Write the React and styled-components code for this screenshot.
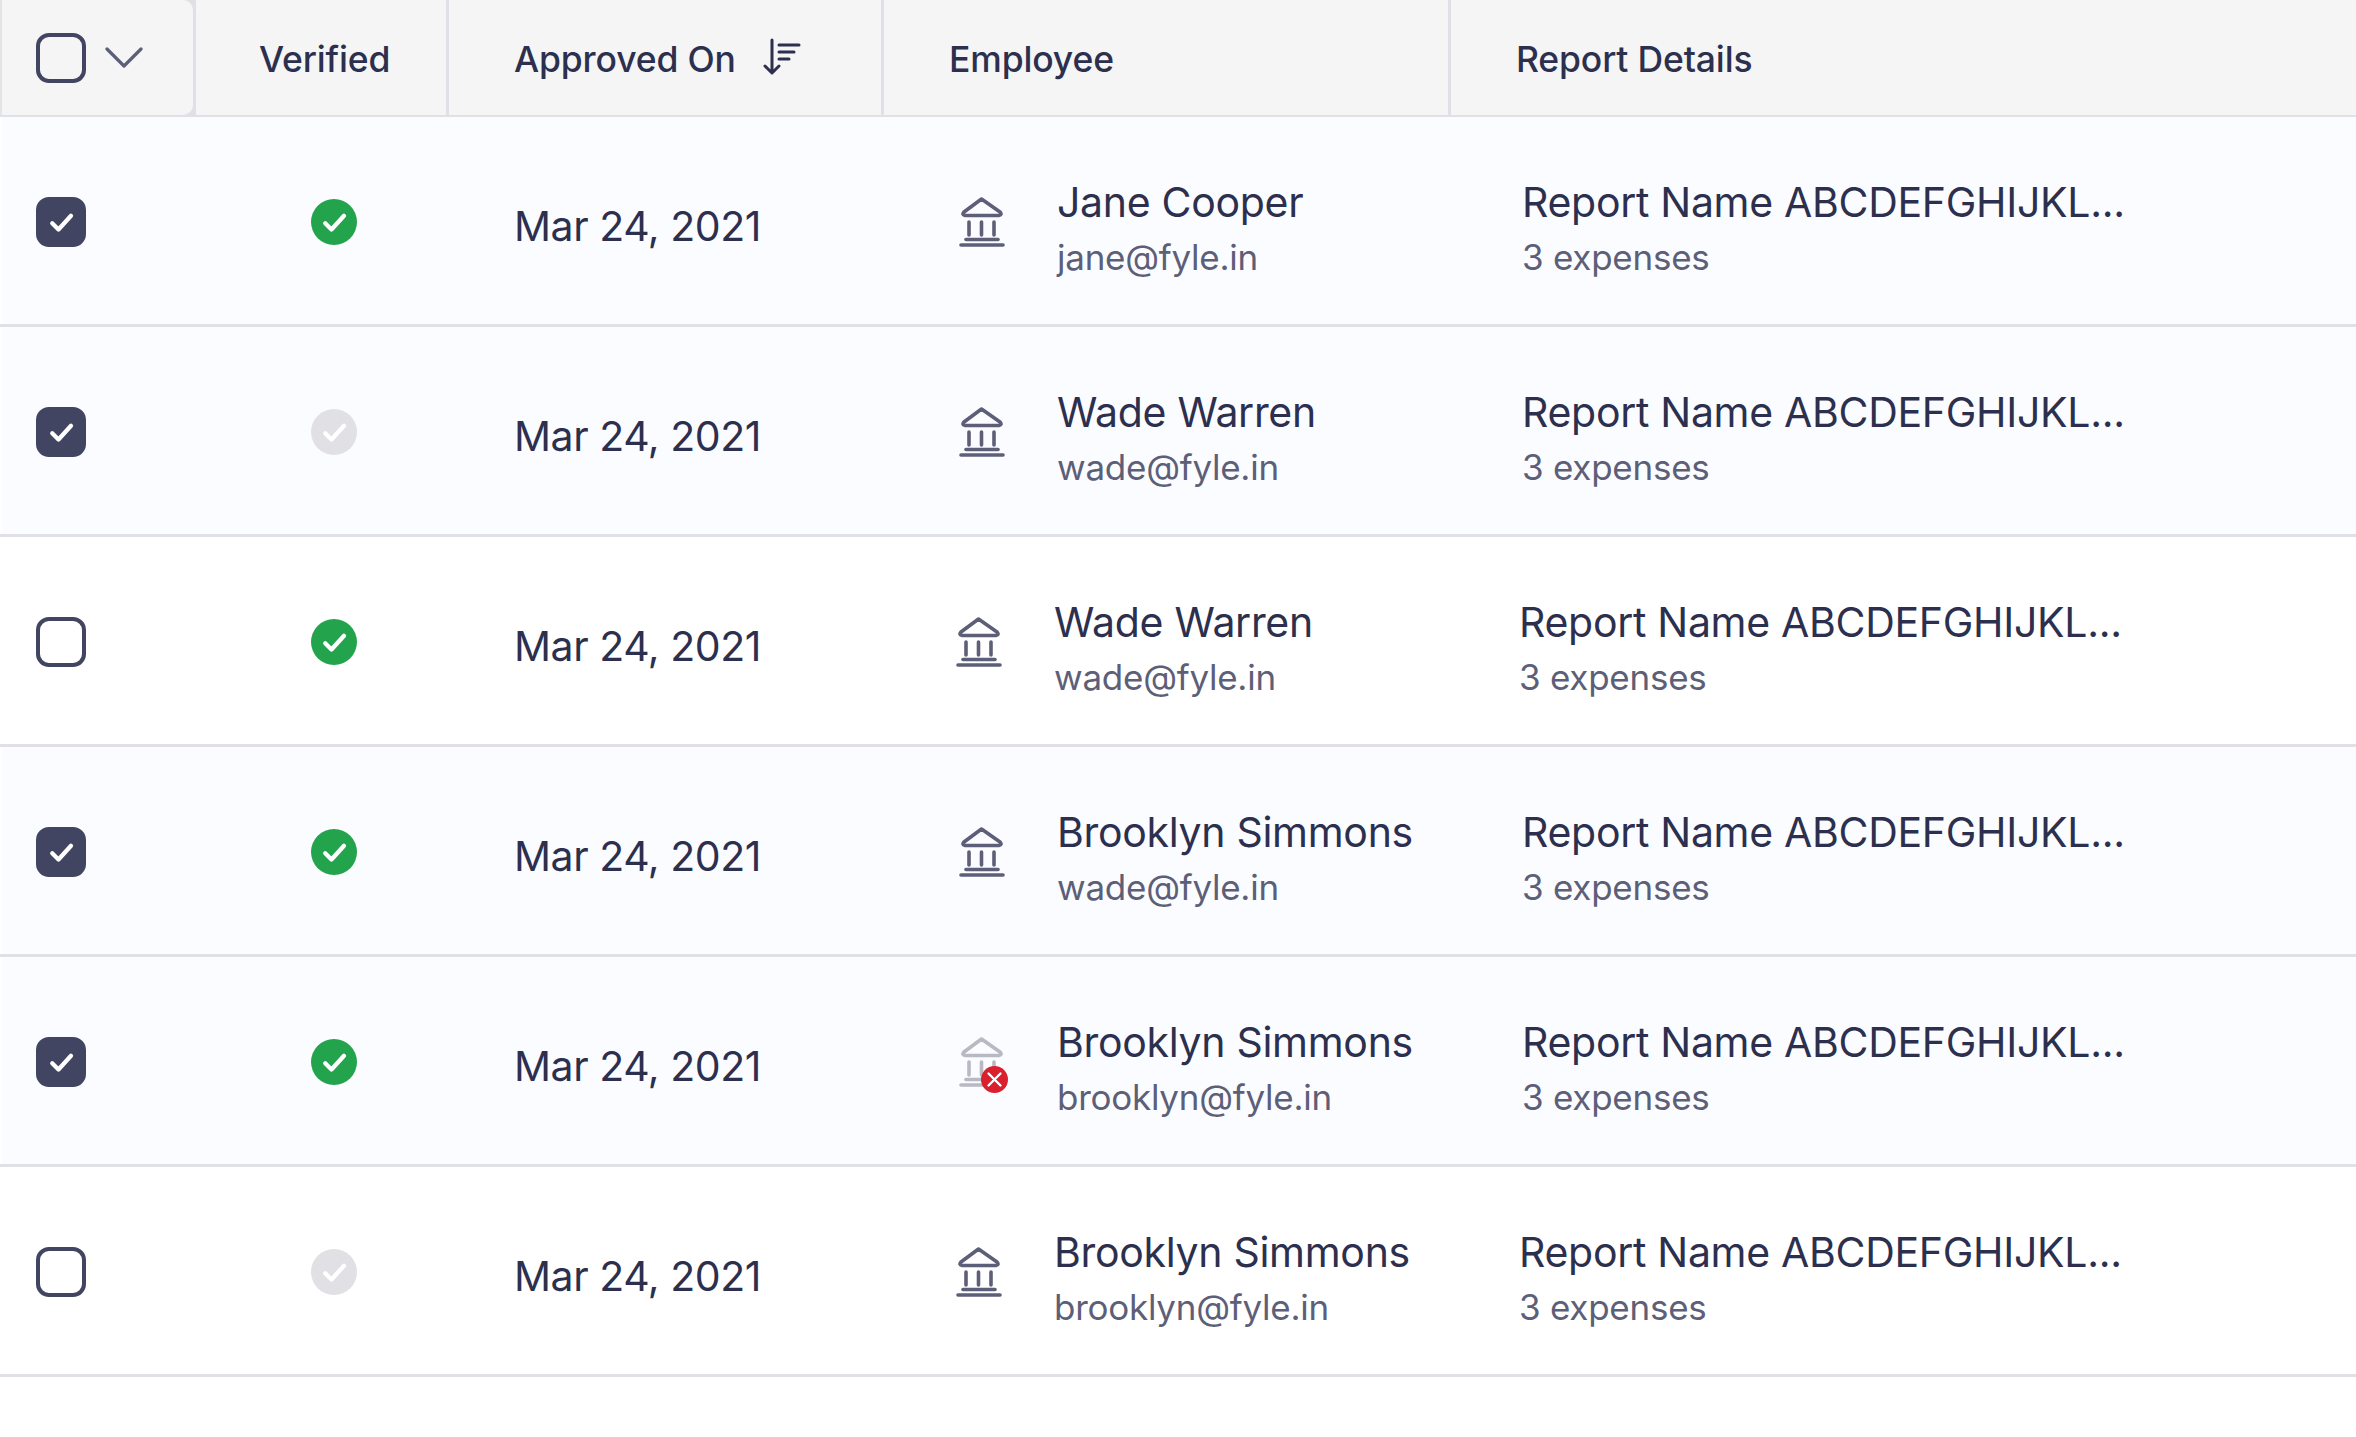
import React from 'react';
import styled, {createGlobalStyle} from 'styled-components';

const Global = createGlobalStyle`
  html, body {
    margin: 0;
    padding: 0;
    background: #fff;
    overflow: hidden;
  }
  body {
    font-family: Inter, "Open Sans", "Liberation Sans", sans-serif;
    color: #2c304e;
  }
`

const Table = styled.div`
  width: 2356px;
  height: 1437px;
`

const HeaderRow = styled.div`
  display: grid;
  grid-template-columns: 196px 253px 435px 567px 1fr;
  height: 118px;
  margin-bottom: -1px;
  box-sizing: border-box;
  border-bottom: 3px solid #e0e0e6;
  background: #e0e0e6;
`

const HeaderCell = styled.div`
  display: flex;
  align-items: center;
  box-sizing: border-box;
  background: #f5f5f5;
  padding-left: ${p => p.$pad}px;
  padding-top: ${p => p.$round ? 0 : 3}px;
  margin-right: 3px;
  font-size: 35.5px;
  font-weight: 500;
  letter-spacing: -0.15px;
  color: #2c304e;
  border-bottom-right-radius: ${p => p.$round ? 10 : 0}px;
  border-top-right-radius: ${p => p.$round ? 10 : 0}px;
  box-shadow: ${p => p.$round ? 'inset 2px 0 0 #e4e4e8' : 'none'};
  &:last-child {
    margin-right: 0;
  }
`

const Row = styled.div`
  display: grid;
  grid-template-columns: 196px 253px 435px ${p => p.$shift ? 564 : 567}px 1fr;
  height: 210px;
  padding-top: 3px;
  box-sizing: border-box;
  border-bottom: 3px solid #e0e0e6;
  background: ${p => p.$tinted ? '#fbfcff' : '#fff'};
  box-shadow: inset 2px 0 0 #fff;
`

const Cell = styled.div`
  display: flex;
  align-items: center;
  box-sizing: border-box;
  padding-left: ${p => p.$pad || 0}px;
`

const Box = styled.div`
  width: 50px;
  height: 50px;
  box-sizing: border-box;
  border-radius: 13px;
  border: 4px solid #414562;
  background: ${p => p.$checked ? '#414562' : 'transparent'};
  display: flex;
  align-items: center;
  justify-content: center;
`

const Chevron = styled.svg`
  width: 38px;
  height: 24px;
  margin-left: 19px;
  margin-top: 0;
`

const SortIcon = styled.svg`
  width: 38px;
  height: 38px;
  margin-left: 27px;
  margin-top: -4px;
`

const Dot = styled.div`
  width: 46px;
  height: 46px;
  border-radius: 50%;
  background: ${p => p.$on ? '#24a34d' : '#e0e0e5'};
  display: flex;
  align-items: center;
  justify-content: center;
`

const DateText = styled.div`
  font-size: 41px;
  letter-spacing: -0.45px;
  color: #2c304e;
  margin-top: 7px;
`

const Bank = styled.div`
  position: relative;
  width: 46px;
  height: 50px;
  flex-shrink: 0;
  color: ${p => p.$faded ? '#b7b9c3' : '#5d5f78'};
`

const Badge = styled.div`
  position: absolute;
  right: -3px;
  bottom: -6px;
  width: 27px;
  height: 27px;
  border-radius: 50%;
  background: #da1f2e;
  display: flex;
  align-items: center;
  justify-content: center;
`

const Stack = styled.div`
  margin-left: ${p => p.$gap || 0}px;
  padding-top: 11px;
  display: flex;
  flex-direction: column;
`

const Title = styled.div`
  font-size: 41px;
  line-height: 50px;
  letter-spacing: -0.3px;
  color: #2c304e;
`

const Sub = styled.div`
  font-size: 35px;
  line-height: 44px;
  margin-top: 8px;
  letter-spacing: -0.25px;
  color: #5d5f78;
`

const Check = ({size, color}) => (
  <svg width={size} height={size} viewBox="0 0 24 24" fill="none">
    <path d="M5 13 L10 18 L20 7" stroke={color} strokeWidth="3.4" strokeLinecap="round" strokeLinejoin="round"/>
  </svg>
)

const BankIcon = () => (
  <svg width="46" height="50" viewBox="0 0 46 50" fill="none" stroke="currentColor" strokeWidth="3.6" strokeLinecap="round" strokeLinejoin="round">
    <path d="M22.5 2 L41 15 Q43.5 18 40 18.5 L6 18.5 Q2.5 18 5 15 Z"/>
    <path d="M10 25 V38 M22.5 25 V38 M35 25 V38"/>
    <path d="M7 42.5 H39"/>
    <path d="M2 48 H44"/>
  </svg>
)

const rows = [
  {id: 1, checked: true, verified: true, name: 'Jane Cooper', email: 'jane@fyle.in', tinted: true},
  {id: 2, checked: true, verified: false, name: 'Wade Warren', email: 'wade@fyle.in', tinted: true},
  {id: 3, checked: false, verified: true, name: 'Wade Warren', email: 'wade@fyle.in', shift: true},
  {id: 4, checked: true, verified: true, name: 'Brooklyn Simmons', email: 'wade@fyle.in', tinted: true},
  {id: 5, checked: true, verified: true, name: 'Brooklyn Simmons', email: 'brooklyn@fyle.in', tinted: true, error: true},
  {id: 6, checked: false, verified: false, name: 'Brooklyn Simmons', email: 'brooklyn@fyle.in', shift: true},
]

const App = () => {
  return (
    <Table>
      <Global/>
      <HeaderRow>
        <HeaderCell $pad={36} $round>
          <Box/>
          <Chevron viewBox="0 0 38 24" fill="none">
            <path d="M2 3 L19 20 L36 3" stroke="#5d5f78" strokeWidth="3.2" strokeLinecap="round" strokeLinejoin="round"/>
          </Chevron>
        </HeaderCell>
        <HeaderCell $pad={63}>Verified</HeaderCell>
        <HeaderCell $pad={65}>
          Approved On
          <SortIcon viewBox="0 0 38 38" fill="none" stroke="#2c304e" strokeWidth="3" strokeLinecap="round" strokeLinejoin="round">
            <path d="M9 2 V35 M2 28 L9 35 L16 28"/>
            <path d="M16 7 H36 M16 14 H31 M16 21 H26"/>
          </SortIcon>
        </HeaderCell>
        <HeaderCell $pad={65}>Employee</HeaderCell>
        <HeaderCell $pad={65}>Report Details</HeaderCell>
      </HeaderRow>
      {rows.map(r => (
        <Row key={r.id} $tinted={r.tinted} $shift={r.shift}>
          <Cell $pad={36}>
            <Box $checked={r.checked}>
              {r.checked && <Check size={30} color="#fff"/>}
            </Box>
          </Cell>
          <Cell $pad={115}>
            <Dot $on={r.verified}>
              <Check size={30} color="#fff"/>
            </Dot>
          </Cell>
          <Cell $pad={65}>
            <DateText>Mar 24, 2021</DateText>
          </Cell>
          <Cell $pad={r.shift ? 72 : 75}>
            <Bank $faded={r.error}>
              <BankIcon/>
              {r.error && (
                <Badge>
                  <svg width="17" height="17" viewBox="0 0 17 17" fill="none">
                    <path d="M2.5 2.5 L14.5 14.5 M14.5 2.5 L2.5 14.5" stroke="#fff" strokeWidth="2.4" strokeLinecap="round"/>
                  </svg>
                </Badge>
              )}
            </Bank>
            <Stack $gap={52}>
              <Title>{r.name}</Title>
              <Sub>{r.email}</Sub>
            </Stack>
          </Cell>
          <Cell $pad={71}>
            <Stack>
              <Title>Report Name ABCDEFGHIJKL...</Title>
              <Sub>3 expenses</Sub>
            </Stack>
          </Cell>
        </Row>
      ))}
    </Table>
  );
};

export default App;
